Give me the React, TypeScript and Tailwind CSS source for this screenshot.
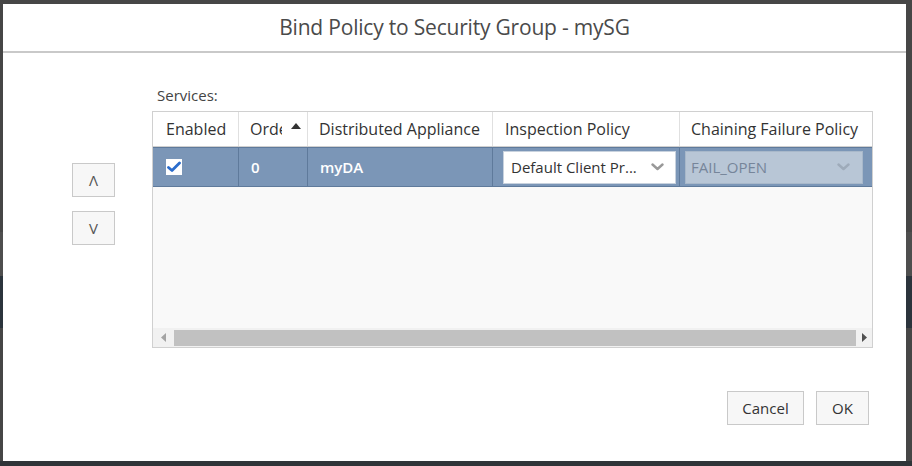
import React from 'react';

const font = { fontFamily: '"Open Sans", "Liberation Sans", sans-serif' };

const Chevron: React.FC<{ color: string }> = ({ color }) => (
  <svg width="13" height="8" viewBox="0 0 13 8" fill="none">
    <path d="M1.5 1.5 L6.5 6 L11.5 1.5" stroke={color} strokeWidth="2.4" strokeLinecap="round" strokeLinejoin="round" />
  </svg>
);

const App: React.FC = () => {
  return (
    <div className="relative w-[912px] h-[466px] overflow-hidden bg-[#464646]" style={font}>
      {/* page behind the dialog */}
      <div className="absolute left-0 right-0 top-[276px] h-[52px] bg-[#2b343c]" />
      <div className="absolute left-0 right-0 top-[232px] h-[44px] bg-[#4e4e4e]" />
      <div className="absolute left-0 right-0 bottom-0 h-[5px] bg-[#2f3438]" />

      {/* dialog */}
      <div className="absolute left-[3px] top-[4px] w-[903px] h-[457px] bg-white flex flex-col">
        <div className="h-[49px] border-b-2 border-[#c9c9c9] flex items-center justify-center">
          <span className="text-[21px] text-[#4a4a4a] tracking-[-0.2px]">Bind Policy to Security Group - mySG</span>
        </div>

        <div className="flex">
          <div className="w-[149px] pl-[69px] pt-[110px] flex flex-col gap-[14px]">
            <button className="w-[43px] h-[34px] bg-[#f7f7f7] border border-[#c9c9c9] text-[#555] text-[15px] flex items-center justify-center">Λ</button>
            <button className="w-[43px] h-[34px] bg-[#f7f7f7] border border-[#c9c9c9] text-[#555] text-[15px] flex items-center justify-center">V</button>
          </div>

          <div className="pt-[32px]">
            <div className="text-[15px] leading-[20px] text-[#444] pl-[5px] mb-[6px]">Services:</div>

            <div className="w-[721px] h-[237px] border border-[#d0d0d0] flex flex-col bg-[#f9f9f9]">
              {/* header */}
              <div className="h-[35px] bg-white border-b border-[#d0d0d0] flex text-[16px] text-[#333] items-center">
                <div className="w-[86px] pl-[13px] h-full flex items-center border-r border-[#e0e0e0]">Enabled</div>
                <div className="w-[69px] pl-[11px] h-full flex items-center border-r border-[#e0e0e0] overflow-hidden whitespace-nowrap">
                  <span className="w-[32px] overflow-hidden">Order</span>
                  <svg width="10" height="6" viewBox="0 0 10 6" className="ml-[9px] mb-[6px]"><path d="M0 6 L5 0 L10 6 Z" fill="#333" /></svg>
                </div>
                <div className="w-[185px] pl-[11px] h-full flex items-center border-r border-[#e0e0e0]">Distributed Appliance</div>
                <div className="w-[187px] pl-[12px] h-full flex items-center border-r border-[#e0e0e0]">Inspection Policy</div>
                <div className="flex-1 pl-[11px] h-full flex items-center whitespace-nowrap">Chaining Failure Policy</div>
              </div>

              {/* row */}
              <div className="h-[40px] bg-[#7b96b7] border-t border-b border-[#5f7a9b] flex text-[15px] font-semibold text-white">
                <div className="w-[86px] border-r border-[#5f7a9b] flex items-center pl-[13px]">
                  <div className="w-[16px] h-[16px] bg-white flex items-center justify-center">
                    <svg width="14" height="12" viewBox="0 0 14 12"><path d="M1.5 6.5 L5 9.5 L12.5 2" stroke="#2a6ccc" strokeWidth="2.8" fill="none" strokeLinecap="round" strokeLinejoin="round" /></svg>
                  </div>
                </div>
                <div className="w-[69px] border-r border-[#5f7a9b] flex items-center pl-[12px]">0</div>
                <div className="w-[185px] border-r border-[#5f7a9b] flex items-center pl-[12px]">myDA</div>
                <div className="w-[187px] border-r border-[#5f7a9b] flex items-center pl-[10px] pr-[2px]">
                  <div className="w-[173px] h-[33px] bg-white border border-[#c8d2de] flex items-center justify-between pl-[7px] pr-[11px] font-normal text-[#333]">
                    <span>Default Client Pr...</span>
                    <Chevron color="#999" />
                  </div>
                </div>
                <div className="flex-1 flex items-center pl-[5px] pr-[7px]">
                  <div className="w-[178px] h-[33px] bg-[#b8c6d6] border border-[#a8b8ca] flex items-center justify-between pl-[5px] pr-[12px] font-normal text-[#76859a]">
                    <span>FAIL_OPEN</span>
                    <Chevron color="#9eabba" />
                  </div>
                </div>
              </div>

              <div className="flex-1" />

              {/* scrollbar */}
              <div className="h-[19px] bg-[#f1f1f1] flex items-center">
                <div className="w-[21px] flex justify-center">
                  <svg width="5" height="9" viewBox="0 0 5 9"><path d="M5 0 L0 4.5 L5 9 Z" fill="#a3a3a3" /></svg>
                </div>
                <div className="w-[682px] h-[16px] bg-[#c1c1c1]" />
                <div className="flex-1 flex justify-center">
                  <svg width="5" height="9" viewBox="0 0 5 9"><path d="M0 0 L5 4.5 L0 9 Z" fill="#505050" /></svg>
                </div>
              </div>
            </div>
          </div>
        </div>

        <div className="flex justify-end gap-[12px] pr-[37px] mt-[43px]">
          <button className="w-[77px] h-[34px] bg-[#f7f7f7] border border-[#c9c9c9] text-[15px] text-[#333]">Cancel</button>
          <button className="w-[53px] h-[34px] bg-[#f7f7f7] border border-[#c9c9c9] text-[15px] text-[#333]">OK</button>
        </div>
      </div>
    </div>
  );
};

export default App;
